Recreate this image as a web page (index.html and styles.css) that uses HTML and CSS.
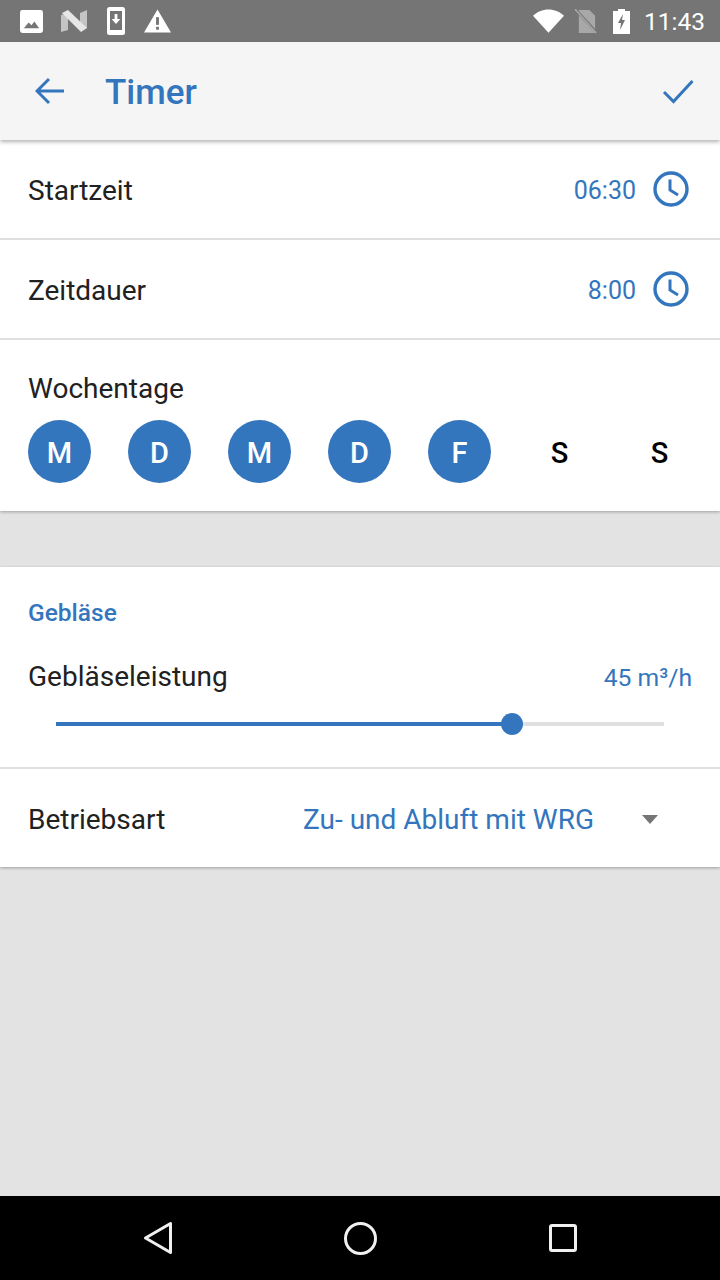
FILE: index.html
```html
<!DOCTYPE html>
<html lang="en">
<head>
    <meta charset="UTF-8">
    <meta name="viewport" content="width=device-width, initial-scale=1.0">
    <title>Timer</title>
    <link rel="stylesheet" href="styles.css">
</head>
<body>

    <!-- Status bar -->
    <div class="statusbar">
        <div class="status-left">
            <svg class="ic-image" viewBox="0 0 24 24"><rect x="0" y="0" width="24" height="24" rx="2.5" fill="#fff"/><path d="M4 19l5-6 3 3 3-4 5 7z" fill="#757575"/></svg>
            <svg class="ic-n" viewBox="0 0 26 22"><path d="M0 5l7-2v17l-7 2z" fill="#c4c4c4"/><path d="M19 3l7-3v18l-7 2z" fill="#c4c4c4"/><path d="M1 3l6-3 19 18-6 4z" fill="#e6e6e6"/></svg>
            <svg class="ic-phone" viewBox="0 0 18 28"><rect x="0" y="0" width="18" height="28" rx="2.5" fill="#fff"/><rect x="3" y="4" width="12" height="19" fill="#757575"/><path d="M7.6 7h2.8v5h3L9 17l-4.400-5h3z" fill="#fff"/></svg>
            <svg class="ic-warn" viewBox="0 0 28 24"><path d="M14 0l14 24H0z" fill="#fff"/><rect x="12.500" y="8" width="3" height="8" fill="#757575"/><rect x="12.500" y="18" width="3" height="3" fill="#757575"/></svg>
        </div>
        <div class="status-right">
            <svg class="ic-wifi" viewBox="0 0 32 24"><path d="M0 6.500C4 2.500 10 0 16 0s12 2.500 16 6.500L16 24z" fill="#fff"/></svg>
            <svg class="ic-sim" viewBox="0 0 24 26"><path d="M4 1h11l6 6v18H4z" fill="#a8a8a8"/><path d="M1 1l22 24" stroke="#757575" stroke-width="3"/><path d="M0 0l22 25" stroke="#a8a8a8" stroke-width="1.500"/></svg>
            <svg class="ic-batt" viewBox="0 0 17 25"><path d="M5 0h7v2h5v23H0V2h5z" fill="#fff"/><path d="M10 5l-5 9h3l-1 7 5-10H9z" fill="#757575"/></svg>
            <span class="clock">11:43</span>
        </div>
    </div>

    <!-- Toolbar -->
    <header class="toolbar">
        <svg class="ic-back" viewBox="0 0 30 28"><path d="M29 14H3M14 2L2 14l12 12" fill="none" stroke="#3476bd" stroke-width="3"/></svg>
        <h1>Timer</h1>
        <svg class="ic-check" viewBox="0 0 32 26"><path d="M2 14l9.500 9.500L30.500 3" fill="none" stroke="#3476bd" stroke-width="3"/></svg>
    </header>

    <div class="content">

        <section class="card card-timer">
            <div class="row">
                <span class="label">Startzeit</span>
                <span class="value">06:30</span>
                <svg class="ic-clock" viewBox="0 0 36 36"><circle cx="18" cy="18" r="16" fill="none" stroke="#3476bd" stroke-width="3.400"/><path d="M17 8.500V19l8 5" fill="none" stroke="#3476bd" stroke-width="3"/></svg>
            </div>
            <div class="row">
                <span class="label">Zeitdauer</span>
                <span class="value">8:00</span>
                <svg class="ic-clock" viewBox="0 0 36 36"><circle cx="18" cy="18" r="16" fill="none" stroke="#3476bd" stroke-width="3.400"/><path d="M17 8.500V19l8 5" fill="none" stroke="#3476bd" stroke-width="3"/></svg>
            </div>
            <div class="days-row">
                <div class="label">Wochentage</div>
                <div class="days">
                    <span class="day on">M</span>
                    <span class="day on">D</span>
                    <span class="day on">M</span>
                    <span class="day on">D</span>
                    <span class="day on">F</span>
                    <span class="day">S</span>
                    <span class="day">S</span>
                </div>
            </div>
        </section>

        <section class="card card-fan">
            <div class="fan-top">
                <h2>Gebläse</h2>
                <div class="power-line">
                    <span class="label">Gebläseleistung</span>
                    <span class="value">45 m³/h</span>
                </div>
                <div class="slider">
                    <div class="slider-fill" style="width: 75%"></div>
                    <div class="slider-thumb" style="left: 75%"></div>
                </div>
            </div>
            <div class="mode-row">
                <span class="label">Betriebsart</span>
                <span class="mode-value">Zu- und Abluft mit WRG</span>
                <span class="caret"></span>
            </div>
        </section>

    </div>

    <!-- Navigation bar -->
    <nav class="navbar">
        <svg class="ic-nav" viewBox="0 0 28 32"><path d="M26.500 1.500v29L1.500 16z" fill="none" stroke="#f0f0f0" stroke-width="3" stroke-linejoin="round"/></svg>
        <svg class="ic-nav" viewBox="0 0 33 33"><circle cx="16.500" cy="16.500" r="15" fill="none" stroke="#f0f0f0" stroke-width="3"/></svg>
        <svg class="ic-nav" viewBox="0 0 28 28"><rect x="1.500" y="1.500" width="25" height="25" rx="1.500" fill="none" stroke="#f0f0f0" stroke-width="3"/></svg>
    </nav>

</body>
</html>
```

FILE: styles.css
```css
* {
    box-sizing: border-box;
}

body {
    font-family: Roboto, sans-serif;
    margin: 0;
    width: 720px;
    height: 1280px;
    display: flex;
    flex-direction: column;
    background-color: #e3e3e3;
    color: #212121;
    overflow: hidden;
}

svg {
    display: block;
    flex: none;
}

/* Status bar */
.statusbar {
    height: 42px;
    background-color: #757575;
    display: flex;
    align-items: center;
    justify-content: space-between;
    padding: 0 15px 0 20px;
}

.status-left,
.status-right {
    display: flex;
    align-items: center;
}

.ic-image { width: 23px; height: 23px; margin-right: 18px; }
.ic-n { width: 26px; height: 22px; margin-right: 20px; }
.ic-phone { width: 18px; height: 28px; margin-right: 19px; }
.ic-warn { width: 27px; height: 24px; margin-top: -1px; }

.ic-wifi { width: 31px; height: 24px; margin-right: 11px; }
.ic-sim { width: 23px; height: 25px; margin-right: 15px; }
.ic-batt { width: 17px; height: 25px; margin-right: 14px; }

.clock {
    color: #fff;
    font-size: 24.5px;
}

/* Toolbar */
.toolbar {
    height: 98px;
    background-color: #f5f5f5;
    display: flex;
    align-items: center;
    padding: 0 26px 0 35px;
    box-shadow: 0 2px 4px rgba(0, 0, 0, 0.3);
    position: relative;
}

.ic-back { width: 30px; height: 28px; margin-right: 40px; }
.ic-check { width: 32px; height: 26px; }

.toolbar h1 {
    flex: 1;
    margin: 2px 0 0;
    font-size: 35px;
    font-weight: 500;
    color: #3476bd;
}

/* Cards */
.content {
    flex: 1;
}

.card {
    background: #fff;
    box-shadow: 0 1px 3px rgba(0, 0, 0, 0.3);
}

.card-timer {
    height: 371px;
}

.card-fan {
    height: 300px;
    margin-top: 56px;
}

.row {
    height: 100px;
    display: flex;
    align-items: center;
    padding: 2px 31px 0 28px;
    border-bottom: 2px solid #e0e0e0;
}

.label {
    font-size: 28px;
    flex: 1;
}

.value {
    font-size: 25px;
    color: #3476bd;
}

.ic-clock {
    width: 36px;
    height: 36px;
    margin-left: 17px;
    margin-bottom: 3px;
}

.days-row {
    padding: 32px 28px 0;
}

.days {
    display: flex;
    gap: 37px;
    margin-top: 15px;
}

.day {
    width: 63px;
    height: 63px;
    padding-top: 2px;
    border-radius: 50%;
    display: flex;
    align-items: center;
    justify-content: center;
    font-size: 29px;
    font-weight: 500;
    color: #000;
}

.day.on {
    background-color: #3476bd;
    color: #fff;
}

/* Fan section */
.fan-top {
    height: 202px;
    padding: 31px 28px 0;
    border-bottom: 2px solid #e0e0e0;
}

.fan-top h2 {
    margin: 0;
    font-size: 24.5px;
    font-weight: 500;
    color: #3476bd;
}

.power-line {
    display: flex;
    align-items: center;
    margin-top: 33px;
}

.power-line .value {
    font-size: 24.7px;
    padding-top: 2px;
}

.slider {
    position: relative;
    height: 4px;
    margin: 29px 28px 0;
    background-color: #e0e0e0;
}

.slider-fill {
    height: 4px;
    background-color: #3476bd;
}

.slider-thumb {
    position: absolute;
    top: -9px;
    width: 22px;
    height: 22px;
    margin-left: -11px;
    border-radius: 50%;
    background-color: #3476bd;
}

.mode-row {
    height: 98px;
    display: flex;
    align-items: center;
    padding: 2px 62px 0 28px;
}

.mode-row .label {
    flex: none;
    width: 275px;
}

.mode-value {
    flex: 1;
    font-size: 28px;
    color: #3476bd;
}

.caret {
    width: 0;
    height: 0;
    border-left: 8px solid transparent;
    border-right: 8px solid transparent;
    border-top: 9px solid #757575;
}

/* Navigation bar */
.navbar {
    height: 84px;
    background-color: #000;
    display: grid;
    grid-template-columns: repeat(3, 1fr);
    justify-items: center;
    align-items: center;
    padding: 0 55px;
}

.navbar .ic-nav:nth-child(1) { width: 28px; height: 32px; margin-left: 2px; }
.navbar .ic-nav:nth-child(2) { width: 33px; height: 33px; margin-left: 1px; }
.navbar .ic-nav:nth-child(3) { width: 28px; height: 28px; }
```
